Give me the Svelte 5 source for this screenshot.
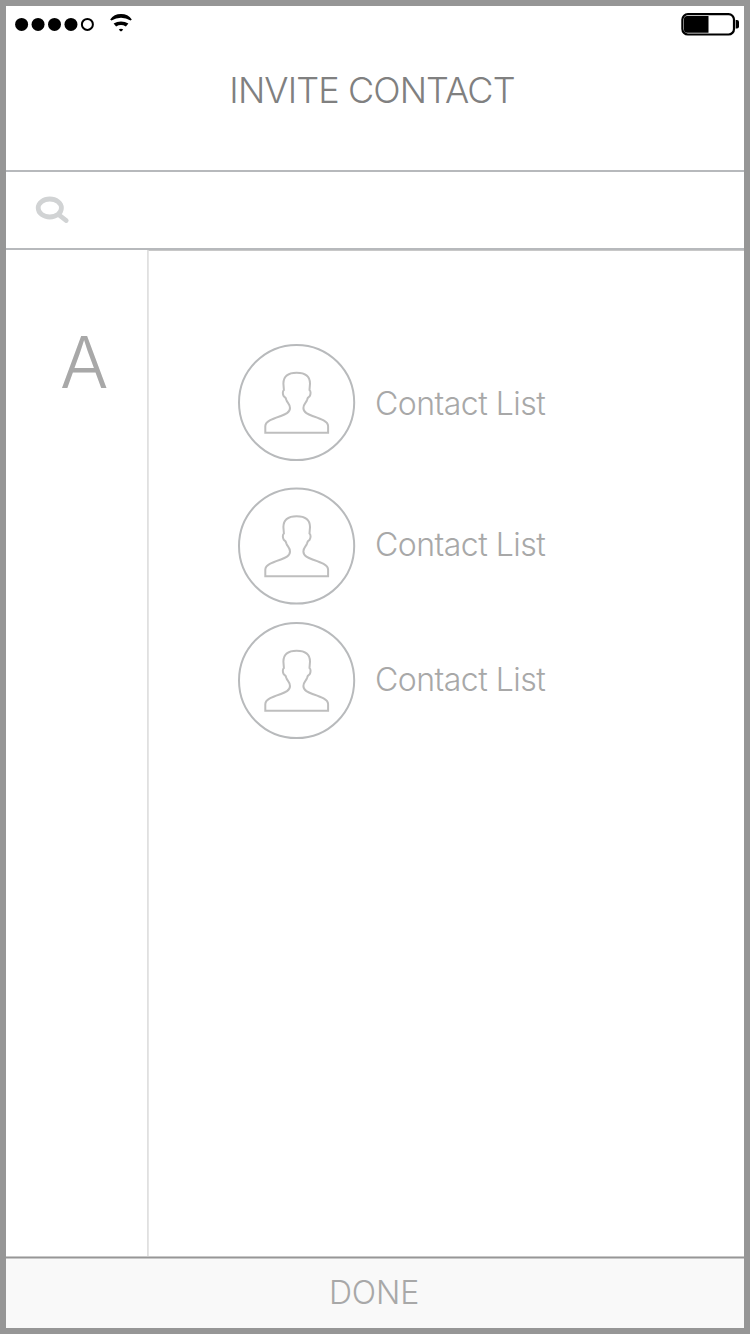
<script>
  const contacts = [
    { name: 'Contact List', variant: 'first', shift: 0 },
    { name: 'Contact List', variant: 'second', shift: 0.5 },
    { name: 'Contact List', variant: 'third', shift: 0 }
  ];
  const signal = [true, true, true, true, false];
</script>

<main class="screen">
  <div class="status">
    <div class="carrier">
      <svg class="signal" width="82" height="16" viewBox="0 0 82 16">
        {#each signal as on, i}
          {#if on}
            <circle cx={7.6 + i * 16.45} cy="8.4" r="6.5" fill="#000" />
          {:else}
            <circle cx={7.6 + i * 16.45} cy="8.4" r="5.5" fill="none" stroke="#000" stroke-width="2" />
          {/if}
        {/each}
      </svg>
      <svg class="wifi" width="24" height="20" viewBox="0 0 24 20">
        <path d="M1.2 7.4 Q5 2 12 2 Q19 2 22.8 7.4 L21.6 8.6 Q17 5.8 12 5.8 Q7 5.8 2.4 8.6 Z" />
        <path d="M4.6 11.4 Q8 9.5 12 9.5 Q16 9.5 19.4 11.4 L16.9 14.4 Q14.3 13 12 13 Q9.5 13 7.1 14.4 Z" />
        <path d="M9.8 17.4 Q12 16.2 14.2 17.4 L12.6 19.2 H11.4 Z" />
      </svg>
    </div>
    <svg class="battery" width="60" height="24" viewBox="0 0 60 24">
      <rect x="2.4" y="2.1" width="51.6" height="20.4" rx="5.5" fill="#fff" stroke="#000" stroke-width="2.2" />
      <path d="M28.5 4 H7 Q4 4 4 7 V17.8 Q4 20.8 7 20.8 H28.5 Z" />
      <path d="M55.7 8 H57 Q59 8 59 10 V14.4 Q59 16.4 57 16.4 H55.7 Z" />
    </svg>
  </div>

  <header class="header"><h1>INVITE CONTACT</h1></header>

  <div class="search">
    <svg width="36" height="30" viewBox="0 0 36 30" fill="none" stroke="#d1d3d4">
      <ellipse cx="15.8" cy="14" rx="11.6" ry="9" stroke-width="4.8" />
      <path d="M24.6 20.6 L32.3 26.6" stroke-width="4.6" stroke-linecap="round" />
    </svg>
  </div>

  <div class="body">
    <aside class="index">A</aside>
    <ul class="list">
      {#each contacts as contact}
        <li class={contact.variant}>
          <svg width="119" height="119" viewBox="0 {-contact.shift} 119 119" fill="none">
            <circle cx="59.6" cy="59.5" r="57.6" stroke="#b8babc" stroke-width="2" />
            <path
              d="M59.7 29.7 C50.8 29.7 46.4 33.8 46.4 40.6 L46.9 47 C45.5 48 45.5 51.5 46.8 53.3 C48.1 54.1 49 54.6 49.4 57 C50 59.8 53 61 53 65 C53 69.8 48 71.5 43 73.3 C36 75.7 28.3 78.2 28.3 83.2 V89.8 H91.1 V83.2 C91.1 78.2 83.4 75.7 76.4 73.3 C71.4 71.5 66.4 69.8 66.4 65 C66.4 61 69.4 59.8 70 57 C70.4 54.6 71.3 54.1 72.6 53.3 C73.9 51.5 73.9 48 72.5 47 L73 40.6 C73 33.8 68.6 29.7 59.7 29.7 Z"
              stroke="#bebebe"
              stroke-width="2"
            />
          </svg>
          <span>{contact.name}</span>
        </li>
      {/each}
    </ul>
  </div>

  <button class="done">DONE</button>
</main>

<style>
  :global(body) {
    margin: 0;
    background: #fff;
  }
  .screen {
    box-sizing: border-box;
    width: 750px;
    height: 1334px;
    border: 6px solid #969696;
    background: #fff;
    display: flex;
    flex-direction: column;
    overflow: hidden;
    font-family: Inter, 'Liberation Sans', sans-serif;
    font-weight: 300;
    color: #a8a8a8;
  }
  svg {
    display: block;
    flex: none;
  }
  .status {
    height: 34px;
    display: flex;
    justify-content: space-between;
    padding: 0 4px 0 8px;
  }
  .carrier {
    display: flex;
    gap: 13px;
  }
  .signal {
    margin-top: 10px;
  }
  .wifi {
    margin-top: 6px;
  }
  .battery {
    margin-top: 6px;
  }
  .header {
    height: 130px;
    box-sizing: content-box;
    border-bottom: 2px solid #b7b9bc;
    display: flex;
    justify-content: center;
  }
  h1 {
    margin: 28px 6px 0 0;
    font-size: 36px;
    line-height: 44px;
    font-weight: 300;
    letter-spacing: -0.9px;
    color: #808080;
    white-space: nowrap;
  }
  .search {
    border-bottom: 2px solid #b7b9bc;
    padding: 22px 0 0 28px;
    box-sizing: border-box;
    flex: 0 0 78px;
  }
  .body {
    flex: 1;
    min-height: 0;
    display: flex;
  }
  .index {
    box-sizing: border-box;
    width: 142px;
    border-right: 1px solid #e0e0e0;
    padding: 68px 0 0 54px;
    font-size: 72px;
    line-height: 88px;
  }
  .list {
    flex: 1;
    margin: 0;
    padding: 92px 0 0 88px;
    list-style: none;
    border-top: 1px solid #c8c8c8;
    border-left: 1px solid #e6e6e6;
  }
  li {
    display: flex;
    height: 119px;
    gap: 19px;
  }
  li span {
    margin-top: 42px;
    font-size: 32px;
    line-height: 38px;
    letter-spacing: -0.52px;
    white-space: nowrap;
  }
  .second {
    margin-top: 24px;
  }
  .second span {
    margin-top: 40px;
  }
  .third {
    margin-top: 16px;
  }
  .third span {
    margin-top: 40px;
  }
  .done {
    box-sizing: border-box;
    flex: 0 0 72px;
    width: 100%;
    margin: 0;
    padding: 2px 2px 0 0;
    border: 0;
    box-shadow: inset 0 1px #c8c8c8, inset 0 2px #969696, inset 0 3px #c8c8c8;
    background: #f9f9f9;
    color: #a8a8a8;
    font: 300 32px/70px Inter, 'Liberation Sans', sans-serif;
    letter-spacing: -0.1px;
  }
</style>
